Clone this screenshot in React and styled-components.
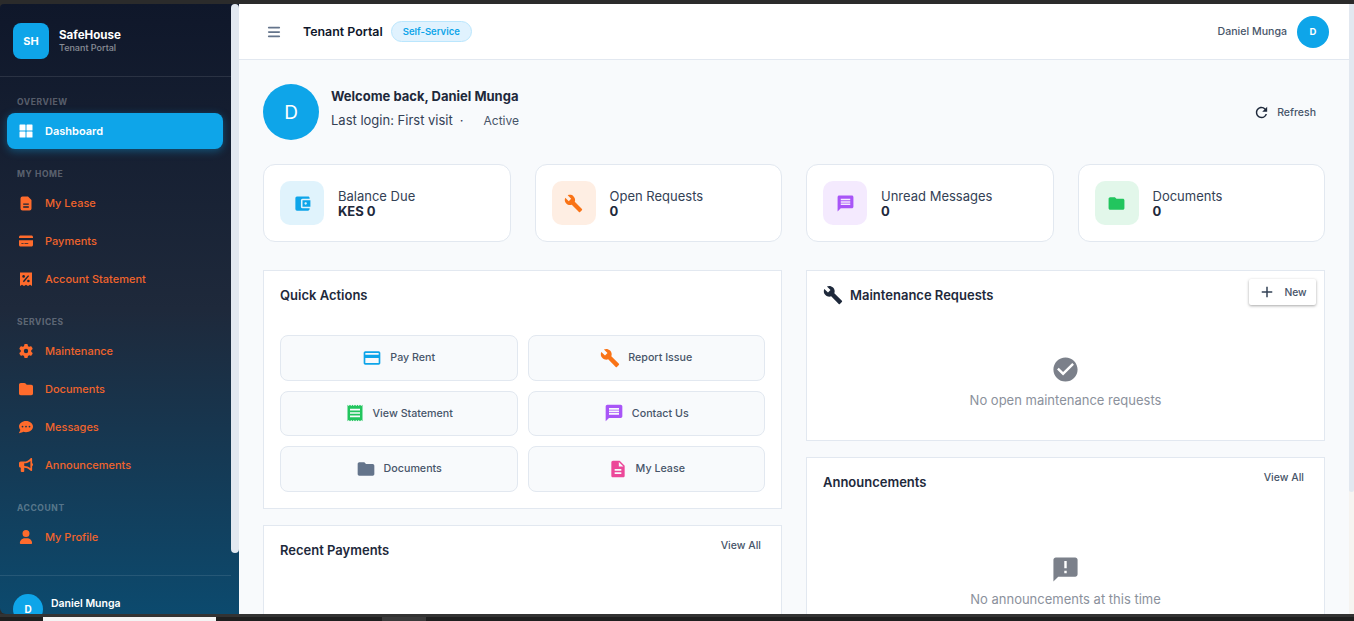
import React from 'react';
import styled, { createGlobalStyle } from 'styled-components';
import {
  MdAccountBalanceWallet,
  MdAdd,
  MdAnnouncement,
  MdBuild,
  MdCheckCircle,
  MdCreditCard,
  MdDescription,
  MdFolder,
  MdMessage,
  MdPayment,
  MdReceipt,
  MdRefresh,
} from 'react-icons/md';
import {
  FaBars,
  FaBullhorn,
  FaCommentDots,
  FaCreditCard,
  FaFolder,
  FaGear,
  FaUser,
} from 'react-icons/fa6';

const GlobalStyle = createGlobalStyle`
  html, body, #root {
    margin: 0;
    height: 100%;
    overflow: hidden;
  }
  body {
    font-family: Inter, "Liberation Sans", sans-serif;
    background: #2b2b2b;
  }
  * {
    box-sizing: border-box;
  }
`;

const Frame = styled.div`
  height: 621px;
  display: flex;
  flex-direction: column;
  background: #2b2b2b;
`;

const TopEdge = styled.div`
  height: 4px;
  flex: none;
`;

const Viewport = styled.div`
  height: 610px;
  flex: none;
  display: flex;
  overflow: hidden;
`;

const TaskStrip = styled.div`
  flex: 1;
  display: flex;
  align-items: flex-end;
  background: #1f1f1f;
  border-top: 3px solid #333;
  padding-left: 43px;
  gap: 166px;
`;

const StripField = styled.div`
  width: 173px;
  height: 4px;
  background: #f4f4f4;
`;

const StripTab = styled.div`
  width: 44px;
  height: 4px;
  background: #3a3a3a;
`;

const Sidebar = styled.aside`
  position: relative;
  width: 239px;
  flex: none;
  display: flex;
  flex-direction: column;
  overflow: hidden;
  border-top-left-radius: 4px;
  border-bottom-left-radius: 6px;
  background: linear-gradient(180deg, #0f172a 0%, #1e293b 50%, #0c4a6e 100%);
`;

const SideThumb = styled.div`
  position: absolute;
  top: 0;
  left: 231px;
  width: 8px;
  height: 549px;
  border-radius: 4px;
  background: #e2e8f0;
`;

const Brand = styled.div`
  width: 231px;
  height: 73px;
  flex: none;
  display: flex;
  align-items: center;
  gap: 10px;
  padding: 2px 13px 0;
  border-bottom: 1px solid rgba(255, 255, 255, 0.1);
`;

const BrandMark = styled.div`
  width: 36px;
  height: 36px;
  border-radius: 8px;
  display: flex;
  align-items: center;
  justify-content: center;
  background: #0ea5e9;
  color: #fff;
  font-size: 11px;
  font-weight: 700;
`;

const BrandName = styled.div`
  color: #fff;
  font-size: 11.6px;
  font-weight: 700;
  line-height: 14px;
`;

const BrandSub = styled.div`
  color: rgba(255, 255, 255, 0.5);
  font-size: 9px;
  font-weight: 500;
  line-height: 12px;
`;

const Nav = styled.nav`
  width: 231px;
  flex: none;
  height: 498px;
  padding: 0 8px 0 7px;
`;

const SectionLabel = styled.div`
  height: ${(p) => p.$height}px;
  padding: 0 10px 6px;
  display: flex;
  align-items: flex-end;
  color: rgba(255, 255, 255, 0.3);
  font-size: 8.5px;
  font-weight: 700;
  letter-spacing: 0.6px;
  line-height: 10px;
`;

const NavItem = styled.a`
  height: 36px;
  margin-bottom: 2px;
  display: flex;
  align-items: center;
  gap: 12px;
  padding-left: 12px;
  border-radius: 8px;
  font-size: 11px;
  font-weight: ${(p) => (p.$active ? 600 : 500)};
  color: ${(p) => (p.$active ? '#fff' : '#f0642c')};
  background: ${(p) => (p.$active ? '#0ea5e9' : 'transparent')};
  box-shadow: ${(p) => (p.$active ? '0 2px 8px rgba(14, 165, 233, 0.4)' : 'none')};
`;

const NavIcon = styled.span`
  width: 14px;
  display: flex;
  justify-content: center;
  color: ${(p) => (p.$active ? '#fff' : '#ff6b2c')};
  font-size: 14px;
`;

const SideFoot = styled.div`
  width: 231px;
  flex: 1;
  display: flex;
  gap: 8px;
  padding: 18px 13px 0;
  border-top: 1px solid rgba(255, 255, 255, 0.1);
`;

const SideAvatar = styled.div`
  width: 30px;
  height: 30px;
  flex: none;
  border-radius: 50%;
  display: flex;
  align-items: center;
  justify-content: center;
  background: #0ea5e9;
  color: #fff;
  font-size: 10px;
  font-weight: 700;
`;

const SideUser = styled.div`
  color: #fff;
  font-size: 10.5px;
  font-weight: 600;
  line-height: 20px;
`;

const SideRole = styled.div`
  color: rgba(255, 255, 255, 0.5);
  font-size: 9px;
  line-height: 8px;
`;

const Main = styled.main`
  position: relative;
  flex: 1;
  min-width: 0;
  display: flex;
  flex-direction: column;
  overflow: hidden;
  background: #f8fafc;
`;

const MainTrack = styled.div`
  position: absolute;
  top: 0;
  right: 0;
  width: 5px;
  height: 100%;
  background: #f6f4f1;
`;

const MainThumb = styled.div`
  width: 100%;
  height: 488px;
  border-radius: 0 0 3px 3px;
  background: #e2e8f0;
`;

const Topbar = styled.header`
  height: 56px;
  flex: none;
  display: flex;
  align-items: center;
  padding: 0 25px 0 28px;
  background: #fff;
  border-bottom: 1px solid #e2e8f0;
`;

const MenuIcon = styled.span`
  display: flex;
  color: #64748b;
  font-size: 14px;
  margin-right: 22px;
`;

const PortalTitle = styled.div`
  color: #0f172a;
  font-size: 12.4px;
  font-weight: 600;
  margin-right: 8px;
`;

const Badge = styled.span`
  height: 21px;
  padding: 0 11px;
  display: flex;
  align-items: center;
  border: 1px solid #bae6fd;
  border-radius: 11px;
  background: #e0f2fe;
  color: #0ea5e9;
  font-size: 9.5px;
  font-weight: 600;
`;

const TopUser = styled.div`
  margin-left: auto;
  display: flex;
  align-items: center;
  gap: 10px;
  color: #475569;
  font-size: 10.6px;
  font-weight: 500;
`;

const TopAvatar = styled.div`
  width: 32px;
  height: 32px;
  border-radius: 50%;
  display: flex;
  align-items: center;
  justify-content: center;
  background: #0ea5e9;
  color: #fff;
  font-size: 9.5px;
  font-weight: 700;
`;

const Content = styled.div`
  padding: 24px 29px 0 24px;
`;

const Welcome = styled.section`
  height: 56px;
  display: flex;
  align-items: center;
  gap: 12px;
`;

const WelcomeAvatar = styled.div`
  width: 56px;
  height: 56px;
  border-radius: 50%;
  display: flex;
  align-items: center;
  justify-content: center;
  background: #0ea5e9;
  color: #fff;
  font-size: 19px;
`;

const WelcomeTitle = styled.div`
  color: #1e293b;
  font-size: 13px;
  font-weight: 700;
  line-height: 18px;
  margin-bottom: 5px;
  margin-top: -7px;
`;

const WelcomeMeta = styled.div`
  display: flex;
  align-items: center;
  color: #334155;
  font-size: 13px;
  line-height: 18px;
`;

const MetaDot = styled.span`
  margin-left: 7px;
`;

const ActiveText = styled.span`
  margin-left: 20px;
  padding-top: 2px;
  color: #475569;
  font-size: 12px;
`;

const RefreshButton = styled.button`
  margin-left: auto;
  margin-right: 9px;
  display: flex;
  align-items: center;
  gap: 7px;
  padding: 0;
  border: 0;
  background: none;
  color: #475569;
  font-family: inherit;
  font-size: 10.5px;
  font-weight: 500;
  svg {
    color: #1e293b;
    font-size: 17px;
  }
`;

const StatRow = styled.section`
  margin-top: 24px;
  display: grid;
  grid-template-columns: repeat(4, 1fr);
  gap: 24px;
`;

const StatCard = styled.div`
  height: 78px;
  display: flex;
  align-items: center;
  gap: 14px;
  padding: 0 16px;
  border: 1px solid #e2e8f0;
  border-radius: 12px;
  background: #fff;
`;

const StatIcon = styled.div`
  width: 44px;
  height: 44px;
  border-radius: 10px;
  display: flex;
  align-items: center;
  justify-content: center;
  background: ${(p) => p.$bg};
  color: ${(p) => p.$color};
  font-size: 19px;
`;

const StatText = styled.div`
  padding-top: 1px;
`;

const StatLabel = styled.div`
  color: #334155;
  font-size: 13px;
  line-height: 16px;
`;

const StatValue = styled.div`
  color: #1e293b;
  font-size: 13px;
  font-weight: 700;
  line-height: 15px;
`;

const Columns = styled.section`
  margin-top: 28px;
  display: grid;
  grid-template-columns: 1fr 1fr;
  gap: 24px;
  align-items: start;
`;

const Column = styled.div`
  display: flex;
  flex-direction: column;
  gap: 16px;
`;

const Panel = styled.div`
  height: ${(p) => p.$height}px;
  padding: 16px;
  border: 1px solid #e2e8f0;
  background: #fff;
`;

const PanelHeader = styled.div`
  display: flex;
  justify-content: space-between;
  align-items: flex-start;
  height: ${(p) => p.$height || 48}px;
`;

const PanelTitle = styled.h3`
  margin: -1px 0 0;
  display: flex;
  align-items: center;
  gap: 7px;
  height: 18px;
  color: #1e293b;
  font-size: 13px;
  font-weight: 600;
  line-height: 18px;
  svg {
    font-size: 20px;
  }
`;

const ViewAll = styled.a`
  margin: -3px 4px 0 0;
  color: #475569;
  font-size: 10.5px;
  font-weight: 500;
  line-height: 14px;
`;

const NewButton = styled.button`
  width: 67px;
  height: 26px;
  margin: -8px -8px 0 0;
  display: flex;
  align-items: center;
  justify-content: center;
  gap: 8px;
  border: 0;
  border-radius: 2px;
  background: #fff;
  box-shadow: 0 1px 3px rgba(0, 0, 0, 0.35);
  color: #475569;
  font-family: inherit;
  font-size: 10.3px;
  font-weight: 500;
  svg {
    color: #334155;
    font-size: 18px;
  }
`;

const ActionGrid = styled.div`
  display: grid;
  grid-template-columns: 1fr 1fr;
  grid-auto-rows: 45.7px;
  gap: 9.9px 10px;
`;

const ActionButton = styled.button`
  display: flex;
  align-items: center;
  justify-content: center;
  gap: 8px;
  padding: 0 0 0.6px;
  border: 1px solid #e2e8f0;
  border-radius: 8px;
  background: #f8fafc;
  color: #475569;
  font-family: inherit;
  font-size: 10.7px;
  font-weight: 500;
  svg {
    color: ${(p) => p.$color};
    font-size: 20px;
  }
`;

const Empty = styled.div`
  display: flex;
  flex-direction: column;
  align-items: center;
  padding-top: ${(p) => p.$top || 0}px;
  gap: ${(p) => p.$gap}px;
  color: #8b919c;
  font-size: 13px;
  line-height: 16px;
  svg {
    color: #7b808a;
    font-size: 29px;
  }
`;

const DashGlyph = () => (
  <svg width="14" height="14" viewBox="0 0 14 14" fill="currentColor">
    <rect x="0.5" y="0.5" width="6" height="6" rx="0.6" />
    <rect x="7.5" y="0.5" width="6" height="6" rx="0.6" />
    <rect x="0.5" y="7.5" width="6" height="6" rx="0.6" />
    <rect x="7.5" y="7.5" width="6" height="6" rx="0.6" />
  </svg>
);

// rounded sheet with two cut-out bars in its lower half
const LeaseGlyph = () => (
  <svg width="12" height="15" viewBox="0 0 12 15">
    <path fill="currentColor" d="M2.5 0.5H8l3.5 3.5v8.5a2 2 0 0 1-2 2h-7a2 2 0 0 1-2-2v-10a2 2 0 0 1 2-2z" />
    <path stroke="#1a2436" strokeWidth="1.3" d="M3.2 8.2h5.6M3.2 11h5.6" />
  </svg>
);

const PercentReceipt = () => (
  <svg width="14" height="15" viewBox="0 0 14 15">
    <path fill="currentColor" d="M1 0.5h12v13.5l-2-1.2-2 1.2-2-1.2-2 1.2-2-1.2-2 1.2z" />
    <path stroke="#1a2436" strokeWidth="1.4" d="M9.6 3.6 4.4 9.8" />
    <circle cx="4.6" cy="4.4" r="1.3" fill="#1a2436" />
    <circle cx="9.4" cy="9" r="1.3" fill="#1a2436" />
  </svg>
);

const sections = [
  { label: 'OVERVIEW', height: 36, items: [{ name: 'Dashboard', icon: <DashGlyph />, active: true }] },
  {
    label: 'MY HOME', height: 34,
    items: [
      { name: 'My Lease', icon: <LeaseGlyph /> },
      { name: 'Payments', icon: <FaCreditCard /> },
      { name: 'Account Statement', icon: <PercentReceipt /> },
    ],
  },
  {
    label: 'SERVICES', height: 34,
    items: [
      { name: 'Maintenance', icon: <FaGear /> },
      { name: 'Documents', icon: <FaFolder /> },
      { name: 'Messages', icon: <FaCommentDots /> },
      { name: 'Announcements', icon: <FaBullhorn /> },
    ],
  },
  { label: 'ACCOUNT', height: 34, items: [{ name: 'My Profile', icon: <FaUser /> }] },
];

const stats = [
  { label: 'Balance Due', value: 'KES 0', icon: <MdAccountBalanceWallet />, bg: 'rgba(14, 165, 233, 0.13)', color: '#0ea5e9' },
  { label: 'Open Requests', value: '0', icon: <MdBuild />, bg: 'rgba(249, 115, 22, 0.12)', color: '#f97316' },
  { label: 'Unread Messages', value: '0', icon: <MdMessage />, bg: 'rgba(168, 85, 247, 0.12)', color: '#a855f7' },
  { label: 'Documents', value: '0', icon: <MdFolder />, bg: 'rgba(34, 197, 94, 0.13)', color: '#22c55e' },
];

const actions = [
  { label: 'Pay Rent', icon: <MdCreditCard />, color: '#0ea5e9' },
  { label: 'Report Issue', icon: <MdBuild />, color: '#f97316' },
  { label: 'View Statement', icon: <MdReceipt />, color: '#22c55e' },
  { label: 'Contact Us', icon: <MdMessage />, color: '#a855f7' },
  { label: 'Documents', icon: <MdFolder />, color: '#64748b' },
  { label: 'My Lease', icon: <MdDescription />, color: '#ec4899' },
];

const App = () => (
  <Frame>
    <GlobalStyle />
    <TopEdge />
    <Viewport>
      <Sidebar>
        <SideThumb />
        <Brand>
          <BrandMark>SH</BrandMark>
          <div>
            <BrandName>SafeHouse</BrandName>
            <BrandSub>Tenant Portal</BrandSub>
          </div>
        </Brand>
        <Nav>
          {sections.map((section) => (
            <div key={section.label}>
              <SectionLabel $height={section.height}>{section.label}</SectionLabel>
              {section.items.map((item) => (
                <NavItem key={item.name} $active={item.active}>
                  <NavIcon $active={item.active}>{item.icon}</NavIcon>
                  {item.name}
                </NavItem>
              ))}
            </div>
          ))}
        </Nav>
        <SideFoot>
          <SideAvatar>D</SideAvatar>
          <div>
            <SideUser>Daniel Munga</SideUser>
            <SideRole>Tenant</SideRole>
          </div>
        </SideFoot>
      </Sidebar>
      <Main>
        <MainTrack><MainThumb /></MainTrack>
        <Topbar>
          <MenuIcon><FaBars /></MenuIcon>
          <PortalTitle>Tenant Portal</PortalTitle>
          <Badge>Self-Service</Badge>
          <TopUser>
            Daniel Munga
            <TopAvatar>D</TopAvatar>
          </TopUser>
        </Topbar>
        <Content>
          <Welcome>
            <WelcomeAvatar>D</WelcomeAvatar>
            <div>
              <WelcomeTitle>Welcome back, Daniel Munga</WelcomeTitle>
              <WelcomeMeta>
                Last login: First visit
                <MetaDot>·</MetaDot>
                <ActiveText>Active</ActiveText>
              </WelcomeMeta>
            </div>
            <RefreshButton><MdRefresh />Refresh</RefreshButton>
          </Welcome>
          <StatRow>
            {stats.map((stat) => (
              <StatCard key={stat.label}>
                <StatIcon $bg={stat.bg} $color={stat.color}>{stat.icon}</StatIcon>
                <StatText>
                  <StatLabel>{stat.label}</StatLabel>
                  <StatValue>{stat.value}</StatValue>
                </StatText>
              </StatCard>
            ))}
          </StatRow>
          <Columns>
            <Column>
              <Panel $height={239}>
                <PanelHeader><PanelTitle>Quick Actions</PanelTitle></PanelHeader>
                <ActionGrid>
                  {actions.map((action) => (
                    <ActionButton key={action.label} $color={action.color}>
                      {action.icon}
                      {action.label}
                    </ActionButton>
                  ))}
                </ActionGrid>
              </Panel>
              <Panel $height={200}>
                <PanelHeader>
                  <PanelTitle>Recent Payments</PanelTitle>
                  <ViewAll>View All</ViewAll>
                </PanelHeader>
                <Empty $top={21} $gap={8}><MdPayment /></Empty>
              </Panel>
            </Column>
            <Column>
              <Panel $height={171}>
                <PanelHeader $height={68}>
                  <PanelTitle><MdBuild />Maintenance Requests</PanelTitle>
                  <NewButton><MdAdd />New</NewButton>
                </PanelHeader>
                <Empty $gap={8}>
                  <MdCheckCircle />
                  No open maintenance requests
                </Empty>
              </Panel>
              <Panel $height={200}>
                <PanelHeader $height={81}>
                  <PanelTitle>Announcements</PanelTitle>
                  <ViewAll>View All</ViewAll>
                </PanelHeader>
                <Empty $gap={7}>
                  <MdAnnouncement />
                  No announcements at this time
                </Empty>
              </Panel>
            </Column>
          </Columns>
        </Content>
      </Main>
    </Viewport>
    <TaskStrip>
      <StripField />
      <StripTab />
    </TaskStrip>
  </Frame>
);

export default App;
